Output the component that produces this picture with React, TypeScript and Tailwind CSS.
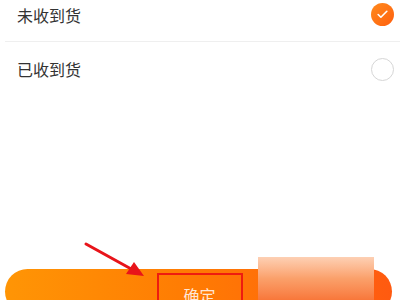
import { Check } from "lucide-react";

const OPTIONS = [
  { label: "未收到货", checked: true },
  { label: "已收到货", checked: false },
];

export default function App() {
  return (
    <div className="relative w-[400px] h-[300px] overflow-hidden bg-white font-['Noto_Sans_CJK_SC',sans-serif]">
      <div className="flex flex-col h-full">
        <div className="mt-[-12px]">
          {OPTIONS.map((o, i) => (
            <div
              key={o.label}
              className={`ml-[5px] h-[54px] flex items-center justify-between pl-[12px] pr-[6px] ${i === 0 ? "border-b border-[#efefef]" : ""}`}
            >
              <span className="text-[16px] text-[#333]">{o.label}</span>
              {o.checked ? (
                <span className="w-[23px] h-[23px] rounded-full bg-gradient-to-br from-[#ff8a1c] to-[#ff5e0e] flex items-center justify-center">
                  <Check size={13} strokeWidth={3} className="text-white" />
                </span>
              ) : (
                <span className="w-[23px] h-[23px] rounded-full border border-[#d6d6d6]" />
              )}
            </div>
          ))}
        </div>
        <div className="flex-1" />
        <div className="pl-[5px] pr-[8px] shrink-0 mb-[-14px]">
          <button className="w-full h-[45px] rounded-full bg-gradient-to-r from-[#ff9505] via-[#ff7a03] to-[#ff5a10] flex justify-center">
            <span className="mt-[4px] ml-[2px] w-[86px] h-[41px] border-2 border-[#ee1c10] flex justify-center pt-[8px] text-[16px] text-[#ffe6d4]">
              确定
            </span>
          </button>
        </div>
      </div>

      <div className="absolute left-[258px] top-[257px] w-[116px] h-[43px] bg-gradient-to-b from-[#fdd0b4] via-[#faa06a] to-[#f8773a]" />

      <svg className="absolute left-0 top-0" width="400" height="300" viewBox="0 0 400 300">
        <line x1="86" y1="244" x2="133" y2="270" stroke="#e8141a" strokeWidth="3" strokeLinecap="round" />
        <polygon points="144,276 126,274 134,262" fill="#e8141a" />
      </svg>
    </div>
  );
}
